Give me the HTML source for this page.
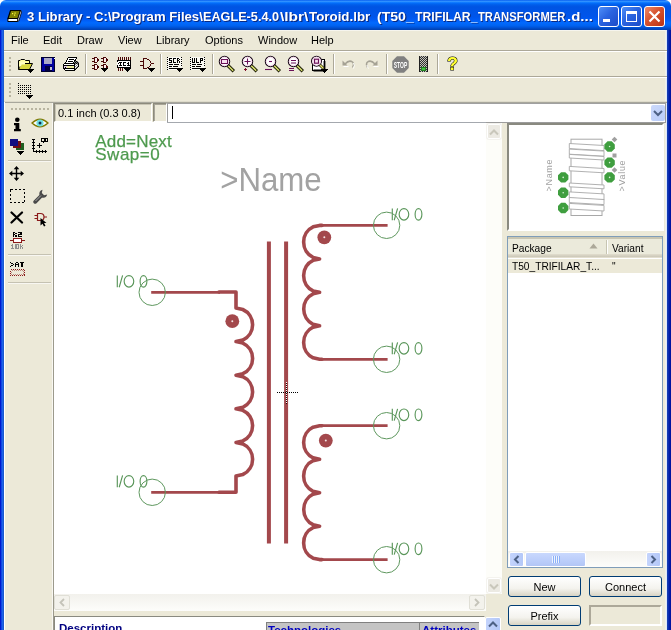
<!DOCTYPE html>
<html>
<head>
<meta charset="utf-8">
<style>
html,body{margin:0;padding:0;}
body{width:671px;height:630px;overflow:hidden;position:relative;background:#ece9d8;font-family:"Liberation Sans",sans-serif;font-size:11px;color:#000;}
.abs{position:absolute;}
div,span,svg{position:absolute;}
#title{left:0;top:0;width:671px;height:30px;border-radius:6px 6px 0 0;background:linear-gradient(to bottom,#0058ee 0%,#3593ff 4%,#288eff 6%,#127dff 8%,#036ffc 10%,#0262ee 14%,#0057e5 20%,#0054e3 24%,#0055eb 56%,#005bf5 66%,#026afe 76%,#0062ef 86%,#0052d6 92%,#0048c0 96%,#0040b0 100%);}
#title .txt{left:27px;top:9px;color:#fff;font-weight:bold;font-size:13px;white-space:nowrap;text-shadow:1px 1px 0 #0a2a80;}
#lb{left:0;top:30px;width:4px;height:600px;background:linear-gradient(to right,#0019cf 0,#0019cf 1px,#0a3ae0 1px,#1d62e8 2.5px,#1a55c0 4px);}
#rb{left:667px;top:30px;width:4px;height:600px;background:linear-gradient(to right,#1a44b4 0,#0a2cb0 1.5px,#001ca8 2.5px,#00109a 4px);}
#menu span{top:34px;font-size:11px;}
.hl{background:#fff;height:1px;}
.sh{background:#aca899;height:1px;}
.vs{background:#aca899;width:1px;height:20px;top:54px;box-shadow:1px 0 0 #fff;}
.wbtn{top:6px;width:21px;height:21px;border-radius:3px;border:1px solid #fff;box-sizing:border-box;}
.grip{width:2px;background:repeating-linear-gradient(to bottom,#b8b4a0 0,#b8b4a0 2px,transparent 2px,transparent 4px);}
.sunk{box-sizing:border-box;border:1px solid;border-color:#aca899 #fff #fff #aca899;}
.btn{box-sizing:border-box;border:1px solid #003c74;border-radius:3px;background:linear-gradient(to bottom,#fff 0%,#f4f3ee 60%,#d8d4c4 100%);text-align:center;font-size:11px;line-height:21px;}
.sbb{box-sizing:border-box;border:1px solid #fff;border-radius:2px;background:linear-gradient(to right,#c4d4fc,#b4c8f8);}
</style>
</head>
<body>
<div id="root" style="left:0;top:0;width:671px;height:630px;will-change:transform;">
<!-- title bar -->
<div style="left:0;top:0;width:671px;height:8px;background:#fff"></div>
<div id="title">
  <div class="txt" style="left:27px;transform:scaleX(1.0097);transform-origin:0 0;white-space:pre">3 Library - C:\Program Files\</div><div class="txt" style="left:203.4px;transform:scaleX(0.9740);transform-origin:0 0;white-space:pre">EAGLE-5.4.0</div><div class="txt" style="left:279.6px;transform:scaleX(1.1911);transform-origin:0 0;white-space:pre">\lbr\</div><div class="txt" style="left:309px;transform:scaleX(1.0267);transform-origin:0 0;white-space:pre">Toroid.lbr</div><div class="txt" style="left:376.8px;transform:scaleX(1.0804);transform-origin:0 0;white-space:pre">(T50_</div><div class="txt" style="left:414.5px;transform:scaleX(0.9405);transform-origin:0 0;white-space:pre">TRIFILAR_</div><div class="txt" style="left:478px;transform:scaleX(0.8644);transform-origin:0 0;white-space:pre">TRANSFORMER</div><div class="txt" style="left:567px;transform:scaleX(1.1522);transform-origin:0 0;white-space:pre">.d...</div>
  <svg style="left:7px;top:9px" width="16" height="15" viewBox="0 0 16 15">
   <path d="M3.500 1.500 H13.5 L11 9.500 H1 Z" fill="#808000" stroke="#000" stroke-width="1.200"/>
   <path d="M1 9.500 L0.800 12.5 H10.5 L11 9.500 Z" fill="#fff" stroke="#000" stroke-width="1"/>
   <path d="M11 9.500 L13.5 1.500 L14.500 3 L11.8 12 L10.5 12.5 Z" fill="#fff" stroke="#000" stroke-width="0.800"/>
   <rect x="5" y="4" width="1.200" height="1.200" fill="#ffff40"/><rect x="7.500" y="3.500" width="1.200" height="1.200" fill="#ffff40"/><rect x="7" y="5.500" width="1.200" height="1.200" fill="#ffff40"/>
  </svg>
  <div class="wbtn" style="left:598px;background:linear-gradient(135deg,#4f8ff8 0%,#2a64e0 45%,#1c4cc8 100%);"><div style="left:4px;top:12px;width:7px;height:3px;background:#fff"></div></div>
  <div class="wbtn" style="left:621px;background:linear-gradient(135deg,#4f8ff8 0%,#2a64e0 45%,#1c4cc8 100%);"><div style="left:4px;top:4px;width:11px;height:11px;box-sizing:border-box;border:1px solid #fff;border-top-width:3px"></div></div>
  <div class="wbtn" style="left:644px;background:linear-gradient(135deg,#ec8a6a 0%,#d6522e 45%,#b83214 100%);"><svg style="left:3px;top:3px" width="13" height="13"><path d="M1.500 1.500 L11.5 11.5 M11.5 1.500 L1.500 11.5" stroke="#fff" stroke-width="2.200"/></svg></div>
</div>
<div style="left:4px;top:30px;width:663px;height:1px;background:#f6f5ee"></div>
<div id="lb"></div>
<div id="rb"></div>
<div style="left:665px;top:30px;width:1px;height:600px;background:#f0f0e8"></div><div style="left:666px;top:30px;width:1px;height:600px;background:#dfe8fa"></div>
<div id="menu" style="left:0;top:0">
  <span style="left:11px">File</span>
  <span style="left:43px">Edit</span>
  <span style="left:77px">Draw</span>
  <span style="left:118px">View</span>
  <span style="left:156px">Library</span>
  <span style="left:205px">Options</span>
  <span style="left:258px">Window</span>
  <span style="left:311px">Help</span>
</div>
<!-- toolbar separators -->
<div class="sh" style="left:4px;top:50px;width:663px"></div>
<div class="hl" style="left:4px;top:51px;width:663px"></div>
<div class="sh" style="left:4px;top:76px;width:663px"></div>
<div class="hl" style="left:4px;top:77px;width:663px"></div>
<div style="left:4px;top:101px;width:663px;height:1px;background:#dedbcb"></div>
<div style="left:4px;top:102px;width:663px;height:1px;background:#a8a79c"></div>
<div class="grip" style="left:9px;top:57px;height:15px"></div>
<div class="grip" style="left:9px;top:83px;height:15px"></div>
<div id="tb1" style="left:0;top:0"><svg style="left:17px;top:57px" width="18" height="17" viewBox="0 0 18 17"><path d="M1.5 12.5 V3.5 H3 L4 2.5 H7.5 L8.5 3.5 H12.5 V6.5" fill="#ffffa0" stroke="#000" stroke-width="1"/>
<path d="M1.5 12.5 L4.5 6.5 H15.5 L12.5 12.5 Z" fill="#d8d840" stroke="#000" stroke-width="1"/>
<path d="M2.5 11 L5 7.5 H8 V4.5 H2.5Z" fill="#ffffc0" stroke="none"/>
<rect x="10" y="12" width="7" height="1" fill="#000" shape-rendering="crispEdges"/><rect x="11" y="13" width="5" height="1" fill="#000" shape-rendering="crispEdges"/><rect x="12" y="14" width="3" height="1" fill="#000" shape-rendering="crispEdges"/><rect x="13" y="15" width="1" height="1" fill="#000" shape-rendering="crispEdges"/></svg><svg style="left:41px;top:57px" width="16" height="15" viewBox="0 0 16 15" shape-rendering="crispEdges"><rect x="0.5" y="0.5" width="13" height="13.5" fill="#0000a0" stroke="#000030" stroke-width="1"/>
<rect x="3" y="1" width="8" height="6" fill="#a8a8c8"/><rect x="4" y="9" width="7" height="5" fill="#000040"/><rect x="9" y="10" width="2" height="3" fill="#c0c0d8"/><rect x="13" y="1" width="1" height="1" fill="#fff"/></svg><svg style="left:63px;top:57px" width="17" height="14" viewBox="0 0 17 14" shape-rendering="crispEdges"><rect x="5" y="0" width="9" height="1" fill="#000"/><rect x="4" y="1" width="1" height="1" fill="#000"/><rect x="5" y="1" width="8" height="1" fill="#fff"/><rect x="13" y="1" width="1" height="1" fill="#000"/><rect x="4" y="2" width="1" height="1" fill="#000"/><rect x="5" y="2" width="1" height="1" fill="#fff"/><rect x="6" y="2" width="5" height="1" fill="#000"/><rect x="11" y="2" width="1" height="1" fill="#fff"/><rect x="12" y="2" width="1" height="1" fill="#000"/><rect x="3" y="3" width="1" height="1" fill="#000"/><rect x="4" y="3" width="7" height="1" fill="#fff"/><rect x="11" y="3" width="2" height="1" fill="#000"/><rect x="3" y="4" width="1" height="1" fill="#000"/><rect x="4" y="4" width="1" height="1" fill="#fff"/><rect x="5" y="4" width="5" height="1" fill="#000"/><rect x="10" y="4" width="1" height="1" fill="#fff"/><rect x="11" y="4" width="1" height="1" fill="#000"/><rect x="12" y="4" width="1" height="1" fill="#808080"/><rect x="13" y="4" width="1" height="1" fill="#000"/><rect x="14" y="4" width="1" height="1" fill="#808080"/><rect x="2" y="5" width="1" height="1" fill="#000"/><rect x="3" y="5" width="7" height="1" fill="#fff"/><rect x="10" y="5" width="1" height="1" fill="#000"/><rect x="11" y="5" width="1" height="1" fill="#808080"/><rect x="12" y="5" width="1" height="1" fill="#000"/><rect x="13" y="5" width="1" height="1" fill="#808080"/><rect x="14" y="5" width="1" height="1" fill="#000"/><rect x="15" y="5" width="1" height="1" fill="#808080"/><rect x="1" y="6" width="11" height="1" fill="#000"/><rect x="12" y="6" width="1" height="1" fill="#808080"/><rect x="13" y="6" width="1" height="1" fill="#000"/><rect x="14" y="6" width="1" height="1" fill="#808080"/><rect x="15" y="6" width="1" height="1" fill="#000"/><rect x="0" y="7" width="1" height="1" fill="#000"/><rect x="1" y="7" width="10" height="1" fill="#fff"/><rect x="11" y="7" width="1" height="1" fill="#000"/><rect x="12" y="7" width="1" height="1" fill="#808080"/><rect x="13" y="7" width="1" height="1" fill="#fff"/><rect x="14" y="7" width="1" height="1" fill="#808080"/><rect x="15" y="7" width="1" height="1" fill="#000"/><rect x="0" y="8" width="12" height="1" fill="#000"/><rect x="12" y="8" width="1" height="1" fill="#fff"/><rect x="13" y="8" width="1" height="1" fill="#808080"/><rect x="14" y="8" width="1" height="1" fill="#fff"/><rect x="15" y="8" width="1" height="1" fill="#000"/><rect x="0" y="9" width="1" height="1" fill="#000"/><rect x="1" y="9" width="3" height="1" fill="#e8d0f0"/><rect x="4" y="9" width="7" height="1" fill="#f0f0a0"/><rect x="11" y="9" width="1" height="1" fill="#000"/><rect x="12" y="9" width="1" height="1" fill="#808080"/><rect x="13" y="9" width="1" height="1" fill="#fff"/><rect x="14" y="9" width="1" height="1" fill="#808080"/><rect x="15" y="9" width="1" height="1" fill="#000"/><rect x="0" y="10" width="1" height="1" fill="#000"/><rect x="1" y="10" width="1" height="1" fill="#e8d0f0"/><rect x="2" y="10" width="1" height="1" fill="#000"/><rect x="3" y="10" width="1" height="1" fill="#e8d0f0"/><rect x="4" y="10" width="7" height="1" fill="#f0f0a0"/><rect x="11" y="10" width="1" height="1" fill="#000"/><rect x="12" y="10" width="1" height="1" fill="#fff"/><rect x="13" y="10" width="1" height="1" fill="#808080"/><rect x="14" y="10" width="1" height="1" fill="#000"/><rect x="0" y="11" width="12" height="1" fill="#000"/><rect x="12" y="11" width="1" height="1" fill="#808080"/><rect x="13" y="11" width="1" height="1" fill="#000"/><rect x="1" y="12" width="1" height="1" fill="#000"/><rect x="2" y="12" width="9" height="1" fill="#fff"/><rect x="11" y="12" width="2" height="1" fill="#000"/><rect x="2" y="13" width="10" height="1" fill="#000"/></svg><svg style="left:92px;top:57px" width="17" height="15" viewBox="0 0 17 15" shape-rendering="crispEdges"><rect x="2" y="0" width="3" height="1" fill="#4a0808"/><rect x="0" y="1" width="3" height="1" fill="#4a0808"/><rect x="3" y="1" width="2" height="1" fill="#fdeeee"/><rect x="5" y="1" width="1" height="1" fill="#4a0808"/><rect x="2" y="2" width="1" height="1" fill="#4a0808"/><rect x="3" y="2" width="2" height="1" fill="#fdeeee"/><rect x="5" y="2" width="2" height="1" fill="#4a0808"/><rect x="2" y="3" width="1" height="1" fill="#4a0808"/><rect x="3" y="3" width="2" height="1" fill="#fdeeee"/><rect x="5" y="3" width="2" height="1" fill="#4a0808"/><rect x="0" y="4" width="3" height="1" fill="#4a0808"/><rect x="3" y="4" width="2" height="1" fill="#fdeeee"/><rect x="5" y="4" width="1" height="1" fill="#4a0808"/><rect x="2" y="5" width="3" height="1" fill="#4a0808"/><rect x="11" y="0" width="3" height="1" fill="#4a0808"/><rect x="9" y="1" width="3" height="1" fill="#4a0808"/><rect x="12" y="1" width="2" height="1" fill="#fdeeee"/><rect x="14" y="1" width="1" height="1" fill="#4a0808"/><rect x="11" y="2" width="1" height="1" fill="#4a0808"/><rect x="12" y="2" width="2" height="1" fill="#fdeeee"/><rect x="14" y="2" width="2" height="1" fill="#4a0808"/><rect x="11" y="3" width="1" height="1" fill="#4a0808"/><rect x="12" y="3" width="2" height="1" fill="#fdeeee"/><rect x="14" y="3" width="2" height="1" fill="#4a0808"/><rect x="9" y="4" width="3" height="1" fill="#4a0808"/><rect x="12" y="4" width="2" height="1" fill="#fdeeee"/><rect x="14" y="4" width="1" height="1" fill="#4a0808"/><rect x="11" y="5" width="3" height="1" fill="#4a0808"/><rect x="2" y="7" width="3" height="1" fill="#4a0808"/><rect x="0" y="8" width="3" height="1" fill="#4a0808"/><rect x="3" y="8" width="2" height="1" fill="#fdeeee"/><rect x="5" y="8" width="1" height="1" fill="#4a0808"/><rect x="2" y="9" width="1" height="1" fill="#4a0808"/><rect x="3" y="9" width="2" height="1" fill="#fdeeee"/><rect x="5" y="9" width="2" height="1" fill="#4a0808"/><rect x="2" y="10" width="1" height="1" fill="#4a0808"/><rect x="3" y="10" width="2" height="1" fill="#fdeeee"/><rect x="5" y="10" width="2" height="1" fill="#4a0808"/><rect x="0" y="11" width="3" height="1" fill="#4a0808"/><rect x="3" y="11" width="2" height="1" fill="#fdeeee"/><rect x="5" y="11" width="1" height="1" fill="#4a0808"/><rect x="2" y="12" width="3" height="1" fill="#4a0808"/><rect x="11" y="7" width="3" height="1" fill="#4a0808"/><rect x="9" y="8" width="3" height="1" fill="#4a0808"/><rect x="12" y="8" width="2" height="1" fill="#fdeeee"/><rect x="14" y="8" width="1" height="1" fill="#4a0808"/><rect x="11" y="9" width="1" height="1" fill="#4a0808"/><rect x="12" y="9" width="2" height="1" fill="#fdeeee"/><rect x="14" y="9" width="2" height="1" fill="#4a0808"/><rect x="11" y="10" width="1" height="1" fill="#4a0808"/><rect x="12" y="10" width="2" height="1" fill="#fdeeee"/><rect x="14" y="10" width="2" height="1" fill="#4a0808"/><rect x="9" y="11" width="7" height="1" fill="#000"/><rect x="10" y="12" width="5" height="1" fill="#000"/><rect x="11" y="13" width="3" height="1" fill="#000"/><rect x="12" y="14" width="1" height="1" fill="#000"/></svg><svg style="left:117px;top:57px" width="15" height="15" viewBox="0 0 15 15" shape-rendering="crispEdges"><rect x="1" y="0" width="1" height="1" fill="#4a0808"/><rect x="3" y="0" width="1" height="1" fill="#4a0808"/><rect x="5" y="0" width="1" height="1" fill="#4a0808"/><rect x="7" y="0" width="1" height="1" fill="#4a0808"/><rect x="9" y="0" width="1" height="1" fill="#4a0808"/><rect x="11" y="0" width="1" height="1" fill="#4a0808"/><rect x="13" y="0" width="1" height="1" fill="#4a0808"/><rect x="1" y="1" width="1" height="1" fill="#4a0808"/><rect x="3" y="1" width="1" height="1" fill="#4a0808"/><rect x="5" y="1" width="1" height="1" fill="#4a0808"/><rect x="7" y="1" width="1" height="1" fill="#4a0808"/><rect x="9" y="1" width="1" height="1" fill="#4a0808"/><rect x="11" y="1" width="1" height="1" fill="#4a0808"/><rect x="13" y="1" width="1" height="1" fill="#4a0808"/><rect x="1" y="2" width="1" height="1" fill="#4a0808"/><rect x="3" y="2" width="1" height="1" fill="#4a0808"/><rect x="5" y="2" width="1" height="1" fill="#4a0808"/><rect x="7" y="2" width="1" height="1" fill="#4a0808"/><rect x="9" y="2" width="1" height="1" fill="#4a0808"/><rect x="11" y="2" width="1" height="1" fill="#4a0808"/><rect x="13" y="2" width="1" height="1" fill="#4a0808"/><rect x="0" y="3" width="14" height="1" fill="#000"/><rect x="0" y="4" width="1" height="1" fill="#000"/><rect x="1" y="4" width="12" height="1" fill="#fff"/><rect x="13" y="4" width="1" height="1" fill="#000"/><rect x="0" y="5" width="2" height="1" fill="#fff"/><rect x="2" y="5" width="3" height="1" fill="#000"/><rect x="5" y="5" width="1" height="1" fill="#fff"/><rect x="6" y="5" width="3" height="1" fill="#000"/><rect x="9" y="5" width="2" height="1" fill="#fff"/><rect x="11" y="5" width="1" height="1" fill="#000"/><rect x="12" y="5" width="1" height="1" fill="#fff"/><rect x="13" y="5" width="1" height="1" fill="#000"/><rect x="0" y="6" width="1" height="1" fill="#fff"/><rect x="1" y="6" width="1" height="1" fill="#000"/><rect x="2" y="6" width="1" height="1" fill="#fff"/><rect x="3" y="6" width="1" height="1" fill="#000"/><rect x="4" y="6" width="2" height="1" fill="#fff"/><rect x="6" y="6" width="1" height="1" fill="#000"/><rect x="7" y="6" width="3" height="1" fill="#fff"/><rect x="10" y="6" width="2" height="1" fill="#000"/><rect x="12" y="6" width="1" height="1" fill="#fff"/><rect x="13" y="6" width="1" height="1" fill="#000"/><rect x="0" y="7" width="3" height="1" fill="#fff"/><rect x="3" y="7" width="1" height="1" fill="#000"/><rect x="4" y="7" width="2" height="1" fill="#fff"/><rect x="6" y="7" width="1" height="1" fill="#000"/><rect x="7" y="7" width="4" height="1" fill="#fff"/><rect x="11" y="7" width="1" height="1" fill="#000"/><rect x="12" y="7" width="1" height="1" fill="#fff"/><rect x="13" y="7" width="1" height="1" fill="#000"/><rect x="0" y="8" width="1" height="1" fill="#000"/><rect x="1" y="8" width="1" height="1" fill="#fff"/><rect x="2" y="8" width="3" height="1" fill="#000"/><rect x="5" y="8" width="1" height="1" fill="#fff"/><rect x="6" y="8" width="3" height="1" fill="#000"/><rect x="9" y="8" width="1" height="1" fill="#fff"/><rect x="10" y="8" width="4" height="1" fill="#000"/><rect x="0" y="9" width="1" height="1" fill="#000"/><rect x="1" y="9" width="12" height="1" fill="#fff"/><rect x="13" y="9" width="1" height="1" fill="#000"/><rect x="0" y="10" width="14" height="1" fill="#000"/><rect x="1" y="11" width="1" height="1" fill="#4a0808"/><rect x="3" y="11" width="1" height="1" fill="#4a0808"/><rect x="5" y="11" width="1" height="1" fill="#4a0808"/><rect x="7" y="11" width="7" height="1" fill="#000"/><rect x="1" y="12" width="1" height="1" fill="#4a0808"/><rect x="3" y="12" width="1" height="1" fill="#4a0808"/><rect x="5" y="12" width="1" height="1" fill="#4a0808"/><rect x="8" y="12" width="5" height="1" fill="#000"/><rect x="1" y="13" width="1" height="1" fill="#4a0808"/><rect x="3" y="13" width="1" height="1" fill="#4a0808"/><rect x="5" y="13" width="1" height="1" fill="#4a0808"/><rect x="9" y="13" width="3" height="1" fill="#000"/><rect x="10" y="14" width="1" height="1" fill="#000"/></svg><svg style="left:140px;top:58px" width="16" height="14" viewBox="0 0 16 14" shape-rendering="crispEdges"><rect x="3" y="0" width="4" height="1" fill="#4a0808"/><rect x="3" y="1" width="1" height="1" fill="#4a0808"/><rect x="7" y="1" width="2" height="1" fill="#4a0808"/><rect x="3" y="2" width="1" height="1" fill="#4a0808"/><rect x="9" y="2" width="1" height="1" fill="#4a0808"/><rect x="0" y="3" width="4" height="1" fill="#4a0808"/><rect x="10" y="3" width="1" height="1" fill="#4a0808"/><rect x="3" y="4" width="1" height="1" fill="#4a0808"/><rect x="10" y="4" width="1" height="1" fill="#4a0808"/><rect x="3" y="5" width="1" height="1" fill="#4a0808"/><rect x="11" y="5" width="3" height="1" fill="#4a0808"/><rect x="3" y="6" width="1" height="1" fill="#4a0808"/><rect x="10" y="6" width="1" height="1" fill="#4a0808"/><rect x="0" y="7" width="4" height="1" fill="#4a0808"/><rect x="10" y="7" width="1" height="1" fill="#4a0808"/><rect x="3" y="8" width="1" height="1" fill="#4a0808"/><rect x="9" y="8" width="1" height="1" fill="#4a0808"/><rect x="3" y="9" width="1" height="1" fill="#4a0808"/><rect x="7" y="9" width="2" height="1" fill="#4a0808"/><rect x="3" y="10" width="4" height="1" fill="#4a0808"/><rect x="8" y="10" width="7" height="1" fill="#000"/><rect x="9" y="11" width="5" height="1" fill="#000"/><rect x="10" y="12" width="3" height="1" fill="#000"/><rect x="11" y="13" width="1" height="1" fill="#000"/></svg><svg style="left:167px;top:57px" width="17" height="16" viewBox="0 0 17 16" shape-rendering="crispEdges"><rect x="0" y="0" width="15" height="13" fill="#fbfaf4"/><rect x="0" y="0" width="1" height="1" fill="#000"/><rect x="0" y="2" width="1" height="1" fill="#000"/><rect x="0" y="4" width="1" height="1" fill="#000"/><rect x="0" y="6" width="1" height="1" fill="#000"/><rect x="0" y="8" width="1" height="1" fill="#000"/><rect x="0" y="10" width="1" height="1" fill="#000"/><rect x="0" y="12" width="1" height="1" fill="#000"/><rect x="14" y="0" width="1" height="1" fill="#000"/><rect x="14" y="2" width="1" height="1" fill="#000"/><rect x="14" y="4" width="1" height="1" fill="#000"/><rect x="14" y="6" width="1" height="1" fill="#000"/><rect x="14" y="8" width="1" height="1" fill="#000"/><rect x="0" y="0" width="1" height="1" fill="#000"/><rect x="14" y="0" width="1" height="1" fill="#000"/><rect x="2.00" y="1.00" width="1" height="1" fill="#000"/><rect x="3.00" y="1.00" width="1" height="1" fill="#000"/><rect x="4.00" y="1.00" width="1" height="1" fill="#000"/><rect x="2.00" y="2.00" width="1" height="1" fill="#000"/><rect x="2.00" y="3.00" width="1" height="1" fill="#000"/><rect x="3.00" y="3.00" width="1" height="1" fill="#000"/><rect x="4.00" y="3.00" width="1" height="1" fill="#000"/><rect x="4.00" y="4.00" width="1" height="1" fill="#000"/><rect x="2.00" y="5.00" width="1" height="1" fill="#000"/><rect x="3.00" y="5.00" width="1" height="1" fill="#000"/><rect x="4.00" y="5.00" width="1" height="1" fill="#000"/><rect x="6.00" y="1.00" width="1" height="1" fill="#000"/><rect x="7.00" y="1.00" width="1" height="1" fill="#000"/><rect x="8.00" y="1.00" width="1" height="1" fill="#000"/><rect x="6.00" y="2.00" width="1" height="1" fill="#000"/><rect x="6.00" y="3.00" width="1" height="1" fill="#000"/><rect x="6.00" y="4.00" width="1" height="1" fill="#000"/><rect x="6.00" y="5.00" width="1" height="1" fill="#000"/><rect x="7.00" y="5.00" width="1" height="1" fill="#000"/><rect x="8.00" y="5.00" width="1" height="1" fill="#000"/><rect x="10.00" y="1.00" width="1" height="1" fill="#000"/><rect x="11.00" y="1.00" width="1" height="1" fill="#000"/><rect x="10.00" y="2.00" width="1" height="1" fill="#000"/><rect x="12.00" y="2.00" width="1" height="1" fill="#000"/><rect x="10.00" y="3.00" width="1" height="1" fill="#000"/><rect x="11.00" y="3.00" width="1" height="1" fill="#000"/><rect x="10.00" y="4.00" width="1" height="1" fill="#000"/><rect x="12.00" y="4.00" width="1" height="1" fill="#000"/><rect x="10.00" y="5.00" width="1" height="1" fill="#000"/><rect x="12.00" y="5.00" width="1" height="1" fill="#000"/><path d="M2 7.500 h4 M7 7.500 h5 M2 9.500 h3 M6 9.500 h5 M2 11.5 h7" stroke="#000"/><rect x="9" y="11" width="7" height="1" fill="#000"/><rect x="10" y="12" width="5" height="1" fill="#000"/><rect x="11" y="13" width="3" height="1" fill="#000"/><rect x="12" y="14" width="1" height="1" fill="#000"/></svg><svg style="left:190px;top:57px" width="17" height="16" viewBox="0 0 17 16" shape-rendering="crispEdges"><rect x="0" y="0" width="15" height="13" fill="#fbfaf4"/><rect x="0" y="0" width="1" height="1" fill="#000"/><rect x="0" y="2" width="1" height="1" fill="#000"/><rect x="0" y="4" width="1" height="1" fill="#000"/><rect x="0" y="6" width="1" height="1" fill="#000"/><rect x="0" y="8" width="1" height="1" fill="#000"/><rect x="0" y="10" width="1" height="1" fill="#000"/><rect x="0" y="12" width="1" height="1" fill="#000"/><rect x="14" y="0" width="1" height="1" fill="#000"/><rect x="14" y="2" width="1" height="1" fill="#000"/><rect x="14" y="4" width="1" height="1" fill="#000"/><rect x="14" y="6" width="1" height="1" fill="#000"/><rect x="14" y="8" width="1" height="1" fill="#000"/><rect x="0" y="0" width="1" height="1" fill="#000"/><rect x="14" y="0" width="1" height="1" fill="#000"/><rect x="2.00" y="1.00" width="1" height="1" fill="#000"/><rect x="4.00" y="1.00" width="1" height="1" fill="#000"/><rect x="2.00" y="2.00" width="1" height="1" fill="#000"/><rect x="4.00" y="2.00" width="1" height="1" fill="#000"/><rect x="2.00" y="3.00" width="1" height="1" fill="#000"/><rect x="4.00" y="3.00" width="1" height="1" fill="#000"/><rect x="2.00" y="4.00" width="1" height="1" fill="#000"/><rect x="4.00" y="4.00" width="1" height="1" fill="#000"/><rect x="2.00" y="5.00" width="1" height="1" fill="#000"/><rect x="3.00" y="5.00" width="1" height="1" fill="#000"/><rect x="4.00" y="5.00" width="1" height="1" fill="#000"/><rect x="6.00" y="1.00" width="1" height="1" fill="#000"/><rect x="6.00" y="2.00" width="1" height="1" fill="#000"/><rect x="6.00" y="3.00" width="1" height="1" fill="#000"/><rect x="6.00" y="4.00" width="1" height="1" fill="#000"/><rect x="6.00" y="5.00" width="1" height="1" fill="#000"/><rect x="7.00" y="5.00" width="1" height="1" fill="#000"/><rect x="8.00" y="5.00" width="1" height="1" fill="#000"/><rect x="10.00" y="1.00" width="1" height="1" fill="#000"/><rect x="11.00" y="1.00" width="1" height="1" fill="#000"/><rect x="12.00" y="1.00" width="1" height="1" fill="#000"/><rect x="10.00" y="2.00" width="1" height="1" fill="#000"/><rect x="12.00" y="2.00" width="1" height="1" fill="#000"/><rect x="10.00" y="3.00" width="1" height="1" fill="#000"/><rect x="11.00" y="3.00" width="1" height="1" fill="#000"/><rect x="12.00" y="3.00" width="1" height="1" fill="#000"/><rect x="10.00" y="4.00" width="1" height="1" fill="#000"/><rect x="10.00" y="5.00" width="1" height="1" fill="#000"/><path d="M2 7.500 h4 M7 7.500 h5 M2 9.500 h3 M6 9.500 h5 M2 11.5 h7" stroke="#000"/><rect x="9" y="11" width="7" height="1" fill="#000"/><rect x="10" y="12" width="5" height="1" fill="#000"/><rect x="11" y="13" width="3" height="1" fill="#000"/><rect x="12" y="14" width="1" height="1" fill="#000"/></svg><svg style="left:218.0px;top:55px" width="19" height="19" viewBox="0 0 19 19"><path d="M9.700 10.2 L15.8 16.3" stroke="#1a1a00" stroke-width="3.400"/><path d="M9.700 10.2 L15.200 15.700" stroke="#d8e070" stroke-width="1.600"/><circle cx="6.500" cy="6.500" r="5.200" fill="#fff" stroke="#1c0c1c" stroke-width="1.1"/><circle cx="6.500" cy="6.500" r="4.200" fill="none" stroke="#f2d4e8" stroke-width="1"/><rect x="3.500" y="4.500" width="6" height="4" fill="#f8e0f0" stroke="#6a1058" stroke-width="1"/></svg><svg style="left:240.5px;top:55px" width="19" height="19" viewBox="0 0 19 19"><path d="M9.700 10.2 L15.8 16.3" stroke="#1a1a00" stroke-width="3.400"/><path d="M9.700 10.2 L15.200 15.700" stroke="#d8e070" stroke-width="1.600"/><circle cx="6.500" cy="6.500" r="5.200" fill="#fff" stroke="#1c0c1c" stroke-width="1.1"/><circle cx="6.500" cy="6.500" r="4.200" fill="none" stroke="#f2d4e8" stroke-width="1"/><path d="M3.500 6.500 H9.500 M6.500 3.500 V9.500" stroke="#6a1058" stroke-width="1.1"/><path d="M3 14.5 H6 M4.500 13 V16" stroke="#801030" stroke-width="1"/></svg><svg style="left:263.5px;top:55px" width="19" height="19" viewBox="0 0 19 19"><path d="M9.700 10.2 L15.8 16.3" stroke="#1a1a00" stroke-width="3.400"/><path d="M9.700 10.2 L15.200 15.700" stroke="#d8e070" stroke-width="1.600"/><circle cx="6.500" cy="6.500" r="5.200" fill="#fff" stroke="#1c0c1c" stroke-width="1.1"/><circle cx="6.500" cy="6.500" r="4.200" fill="none" stroke="#f2d4e8" stroke-width="1"/><path d="M5 6.500 H8" stroke="#6a1058" stroke-width="1.1"/><path d="M1 14.5 H8" stroke="#6a1058" stroke-width="1.1"/></svg><svg style="left:286.5px;top:55px" width="19" height="19" viewBox="0 0 19 19"><path d="M9.700 10.2 L15.8 16.3" stroke="#1a1a00" stroke-width="3.400"/><path d="M9.700 10.2 L15.200 15.700" stroke="#d8e070" stroke-width="1.600"/><circle cx="6.500" cy="6.500" r="5.200" fill="#fff" stroke="#1c0c1c" stroke-width="1.1"/><circle cx="6.500" cy="6.500" r="4.200" fill="none" stroke="#f2d4e8" stroke-width="1"/><path d="M4 5.500 H9 M4 8 H9" stroke="#6a1058" stroke-width="1.1"/><path d="M2 13.5 H7 M2 15.5 H7" stroke="#6a1058" stroke-width="1.2"/></svg><svg style="left:310px;top:55px" width="19" height="19" viewBox="0 0 19 19"><rect x="2.500" y="4.500" width="12" height="11" fill="#fff" stroke="#000"/><path d="M3.500 15.5 H14.500 V6" stroke="#000" stroke-width="1.800" fill="none"/><circle cx="6.500" cy="6.200" r="5" fill="#fff" stroke="#1c0c1c" stroke-width="1.1"/><circle cx="6.500" cy="6.200" r="4" fill="none" stroke="#f2d4e8" stroke-width="1"/><rect x="4.500" y="4.200" width="4" height="4" fill="#f8e0f0" stroke="#6a1058" stroke-width="1.2"/><path d="M10 10 L13.5 13.5" stroke="#303000" stroke-width="3"/><path d="M10.3 10.3 L13.2 13.2" stroke="#e8e870" stroke-width="1.3"/><rect x="11" y="14" width="7" height="1" fill="#000" shape-rendering="crispEdges"/><rect x="12" y="15" width="5" height="1" fill="#000" shape-rendering="crispEdges"/><rect x="13" y="16" width="3" height="1" fill="#000" shape-rendering="crispEdges"/><rect x="14" y="17" width="1" height="1" fill="#000" shape-rendering="crispEdges"/></svg><svg style="left:341px;top:59px" width="15" height="11" viewBox="0 0 15 11"><path d="M1.500 1.500 V6.500 H6.500 Z" fill="#a5a295"/><path d="M4 5 Q8 0.500 11.5 3 Q13.5 5 11.5 8.500" fill="none" stroke="#a5a295" stroke-width="1.500"/><path d="M2.500 7.500 H7.500" stroke="#fff" stroke-width="1"/><path d="M12.5 4 Q14 6 12.5 9.500" fill="none" stroke="#fff" stroke-width="1"/></svg><svg style="left:364px;top:59px" width="15" height="11" viewBox="0 0 15 11"><path d="M13.5 1.500 V6.500 H8.500 Z" fill="#a5a295"/><path d="M11 5 Q7 0.500 3.500 3 Q1.500 5 3.500 8.500" fill="none" stroke="#a5a295" stroke-width="1.500"/><path d="M9.500 7.500 H14.500" stroke="#fff" stroke-width="1"/><path d="M4.500 9.500 Q3 8 3 6" fill="none" stroke="#fff" stroke-width="1"/></svg><svg style="left:392px;top:55.5px" width="17" height="17" viewBox="0 0 17 17"><polygon points="5,0.300 12,0.300 16.7,5 16.7,12 12,16.7 5,16.7 0.300,12 0.300,5" fill="#808080"/><text x="1.800" y="11.6" font-family="Liberation Sans, sans-serif" font-weight="bold" font-size="8.5" fill="#fff" textLength="13.4" lengthAdjust="spacingAndGlyphs">STOP</text></svg><svg style="left:419px;top:56px" width="10" height="16" viewBox="0 0 10 16" shape-rendering="crispEdges"><defs><pattern id="dth" width="2" height="2" patternUnits="userSpaceOnUse"><rect width="2" height="2" fill="#c4c4bc"/><rect width="1" height="1" fill="#303030"/><rect x="1" y="1" width="1" height="1" fill="#303030"/></pattern></defs><rect x="0" y="0" width="9" height="16" fill="url(#dth)"/><rect x="0" y="0" width="1" height="16" fill="#202020"/><rect x="8" y="0" width="1" height="16" fill="#202020"/><rect x="2" y="11" width="5" height="4" fill="#208020"/><rect x="3" y="12" width="3" height="2" fill="#40c040"/></svg><svg style="left:446px;top:54px" width="13" height="18" viewBox="0 0 13 18"><text x="1" y="15.5" font-family="Liberation Sans, sans-serif" font-weight="bold" font-size="18" fill="#ffff30" stroke="#000" stroke-width="1.1" paint-order="stroke">?</text></svg><div class="vs" style="left:85px"></div><div class="vs" style="left:160px"></div><div class="vs" style="left:212px"></div><div class="vs" style="left:333px"></div><div class="vs" style="left:386px"></div><div class="vs" style="left:437px"></div></div>
<div id="tb2" style="left:0;top:0"><svg style="left:18px;top:83px" width="17" height="16" viewBox="0 0 17 16" shape-rendering="crispEdges"><rect x="0" y="0" width="1" height="1" fill="#000"/><rect x="0" y="2" width="1" height="1" fill="#000"/><rect x="0" y="4" width="1" height="1" fill="#000"/><rect x="0" y="6" width="1" height="1" fill="#000"/><rect x="0" y="8" width="1" height="1" fill="#000"/><rect x="0" y="10" width="1" height="1" fill="#000"/><rect x="2" y="2" width="1" height="1" fill="#000"/><rect x="2" y="4" width="1" height="1" fill="#000"/><rect x="2" y="6" width="1" height="1" fill="#000"/><rect x="2" y="8" width="1" height="1" fill="#000"/><rect x="2" y="10" width="1" height="1" fill="#000"/><rect x="4" y="2" width="1" height="1" fill="#000"/><rect x="4" y="4" width="1" height="1" fill="#000"/><rect x="4" y="6" width="1" height="1" fill="#000"/><rect x="4" y="8" width="1" height="1" fill="#000"/><rect x="4" y="10" width="1" height="1" fill="#000"/><rect x="6" y="2" width="1" height="1" fill="#000"/><rect x="6" y="4" width="1" height="1" fill="#000"/><rect x="6" y="6" width="1" height="1" fill="#000"/><rect x="6" y="8" width="1" height="1" fill="#000"/><rect x="6" y="10" width="1" height="1" fill="#000"/><rect x="8" y="2" width="1" height="1" fill="#000"/><rect x="8" y="4" width="1" height="1" fill="#000"/><rect x="8" y="6" width="1" height="1" fill="#000"/><rect x="8" y="8" width="1" height="1" fill="#000"/><rect x="8" y="10" width="1" height="1" fill="#000"/><rect x="10" y="2" width="1" height="1" fill="#000"/><rect x="10" y="4" width="1" height="1" fill="#000"/><rect x="10" y="6" width="1" height="1" fill="#000"/><rect x="10" y="8" width="1" height="1" fill="#000"/><rect x="10" y="10" width="1" height="1" fill="#000"/><rect x="12" y="2" width="1" height="1" fill="#000"/><rect x="12" y="4" width="1" height="1" fill="#000"/><rect x="12" y="6" width="1" height="1" fill="#000"/><rect x="12" y="8" width="1" height="1" fill="#000"/><rect x="12" y="10" width="1" height="1" fill="#000"/><rect x="8" y="12" width="7" height="1" fill="#000" shape-rendering="crispEdges"/><rect x="9" y="13" width="5" height="1" fill="#000" shape-rendering="crispEdges"/><rect x="10" y="14" width="3" height="1" fill="#000" shape-rendering="crispEdges"/><rect x="11" y="15" width="1" height="1" fill="#000" shape-rendering="crispEdges"/></svg></div>

<!-- param bar -->
<div style="left:54px;top:103px;width:98px;height:19px;box-sizing:border-box;border:1px solid;border-color:#8c8a7c #fff #fff #8c8a7c;box-shadow:inset 1px 1px 0 #c8c5b5"></div>
<span style="left:58px;top:107px;font-size:11px;white-space:nowrap;">0.1 inch (0.3 0.8)</span>
<div style="left:153px;top:103px;width:14px;height:19px;box-sizing:border-box;border:1px solid;border-color:#8c8a7c #fff #fff #8c8a7c;box-shadow:inset 1px 1px 0 #a8a598"></div>
<div style="left:167px;top:103px;width:499px;height:20px;background:#fff;box-sizing:border-box;border:1px solid #9c9c9c;border-top-color:#a0a0a0"></div>
<div style="left:172px;top:106px;width:1px;height:13px;background:#000"></div>
<div id="combo" style="left:651px;top:105px;width:14px;height:16px;border-radius:2px;background:linear-gradient(135deg,#cbd9fc,#b9ccf8)"><svg style="left:2px;top:5px" width="10" height="7"><path d="M1 1 L5 5 L9 1" fill="none" stroke="#4d6185" stroke-width="2"/></svg></div>

<!-- left palette -->
<div id="pal" style="left:0;top:0"><div style="left:4px;top:102px;width:1px;height:528px;background:#fff"></div><div style="left:52px;top:103px;width:1px;height:527px;background:#f8f7f2"></div><div style="left:53px;top:103px;width:1px;height:527px;background:#9c9a8c"></div><div style="left:11px;top:108px;width:38px;height:2px;background:repeating-linear-gradient(to right,#b8b4a0 0,#b8b4a0 2px,transparent 2px,transparent 4px)"></div><svg style="left:13px;top:117px" width="9" height="15" viewBox="0 0 9 15"><circle cx="4.300" cy="2.700" r="2.300" fill="#000"/><path d="M1 6 H6.300 V12 H7.800 V14.300 H1 V12 H2.500 V8.200 H1 Z" fill="#000"/></svg><svg style="left:31px;top:117px" width="18" height="13" viewBox="0 0 18 13"><path d="M1 6 Q9 -1.500 17 6 Q9 13.5 1 6 Z" fill="#fff" stroke="#807800" stroke-width="1.3"/><circle cx="9" cy="6" r="3.600" fill="#70e0e0"/><circle cx="9" cy="6" r="1.500" fill="#103050"/></svg><svg style="left:10px;top:139px" width="16" height="16" viewBox="0 0 16 16" shape-rendering="crispEdges"><rect x="6" y="4" width="8" height="7" fill="#206020"/><rect x="3" y="2" width="8" height="7" fill="#701010"/><rect x="0" y="0" width="8" height="7" fill="#101080"/><rect x="7" y="12" width="7" height="1" fill="#000" shape-rendering="crispEdges"/><rect x="8" y="13" width="5" height="1" fill="#000" shape-rendering="crispEdges"/><rect x="9" y="14" width="3" height="1" fill="#000" shape-rendering="crispEdges"/><rect x="10" y="15" width="1" height="1" fill="#000" shape-rendering="crispEdges"/></svg><svg style="left:32px;top:138px" width="17" height="16" viewBox="0 0 17 16" shape-rendering="crispEdges"><path d="M1.500 1 V13.5 H15" stroke="#000" fill="none"/><rect x="0" y="1" width="3" height="1" fill="#000"/><rect x="0" y="4" width="3" height="1" fill="#000"/><rect x="0" y="7" width="3" height="1" fill="#000"/><rect x="0" y="10" width="3" height="1" fill="#000"/><rect x="4" y="12" width="1" height="3" fill="#000"/><rect x="7" y="12" width="1" height="3" fill="#000"/><rect x="10" y="12" width="1" height="3" fill="#000"/><rect x="13" y="12" width="1" height="3" fill="#000"/><path d="M5 7.500 H10 M7.500 5 V10" stroke="#000"/><rect x="9" y="0" width="3" height="3" fill="none" stroke="#000" transform="translate(.5 .5)"/><rect x="11" y="3" width="1" height="2" fill="#000"/><rect x="13" y="0" width="2" height="3" fill="none" stroke="#000" transform="translate(.5 .5)"/></svg><div style="left:8px;top:160px;width:43px;height:1px;background:#c5c2b2;box-shadow:0 1px 0 #f8f7f2"></div><div style="left:8px;top:254px;width:43px;height:1px;background:#c5c2b2;box-shadow:0 1px 0 #f8f7f2"></div><div style="left:8px;top:282px;width:43px;height:1px;background:#c5c2b2;box-shadow:0 1px 0 #f8f7f2"></div><svg style="left:9px;top:166px" width="16" height="16" viewBox="0 0 16 16"><path d="M7.500 2 V13 M2 7.500 H13" stroke="#000" stroke-width="1.400"/><path d="M7.500 0 L10.3 3.300 H4.700Z M7.500 15 L10.3 11.7 H4.700Z M0 7.500 L3.300 4.700 V10.3Z M15 7.500 L11.7 4.700 V10.3Z" fill="#000"/></svg><svg style="left:10px;top:189px" width="15" height="14" viewBox="0 0 15 14" shape-rendering="crispEdges"><rect x="0.500" y="0.500" width="14" height="13" fill="none" stroke="#000" stroke-dasharray="2 2"/></svg><svg style="left:33px;top:189px" width="15" height="15" viewBox="0 0 15 15"><path d="M2.200 12.8 L8.500 6.500" stroke="#4a4a4a" stroke-width="3.800" stroke-linecap="round"/><path d="M6.500 6 Q5.500 2 9.500 0.800 L8.800 4 L11 6.200 L14.200 5.500 Q13 9.500 9 8.500 Z" fill="#4a4a4a"/><path d="M2.500 12 L8 6.500" stroke="#b0b0b0" stroke-width="0.900"/></svg><svg style="left:10px;top:211px" width="14" height="13" viewBox="0 0 14 13"><path d="M1.500 1.500 L12 11.5 M12 1.500 L1.500 11.5" stroke="#000" stroke-width="2.200" stroke-linecap="round"/></svg><svg style="left:34px;top:212px" width="15" height="15" viewBox="0 0 15 15"><path d="M3.500 1.500 H6.500 Q10 1.500 10 5 Q10 8.500 6.500 8.500 H3.500 Z" fill="none" stroke="#8b1a1a" stroke-width="1.200"/><path d="M0.500 3.500 H3.500 M0.500 6.500 H3.500 M10 5 H13" stroke="#8b1a1a" stroke-width="1.200"/><path d="M6.500 6 V13.5 L8.500 11.8 L10 14.500 L11.5 13.8 L10 11 L12.5 11 Z" fill="#000"/></svg><svg style="left:10px;top:232px" width="16" height="18" viewBox="0 0 16 18" shape-rendering="crispEdges"><rect x="2.50" y="0.00" width="1.35" height="1" fill="#000"/><rect x="3.85" y="0.00" width="1.35" height="1" fill="#000"/><rect x="2.50" y="1.00" width="1.35" height="1" fill="#000"/><rect x="5.20" y="1.00" width="1.35" height="1" fill="#000"/><rect x="2.50" y="2.00" width="1.35" height="1" fill="#000"/><rect x="3.85" y="2.00" width="1.35" height="1" fill="#000"/><rect x="2.50" y="3.00" width="1.35" height="1" fill="#000"/><rect x="5.20" y="3.00" width="1.35" height="1" fill="#000"/><rect x="2.50" y="4.00" width="1.35" height="1" fill="#000"/><rect x="5.20" y="4.00" width="1.35" height="1" fill="#000"/><rect x="7.75" y="0.00" width="1.35" height="1" fill="#000"/><rect x="9.10" y="0.00" width="1.35" height="1" fill="#000"/><rect x="10.45" y="0.00" width="1.35" height="1" fill="#000"/><rect x="10.45" y="1.00" width="1.35" height="1" fill="#000"/><rect x="7.75" y="2.00" width="1.35" height="1" fill="#000"/><rect x="9.10" y="2.00" width="1.35" height="1" fill="#000"/><rect x="10.45" y="2.00" width="1.35" height="1" fill="#000"/><rect x="7.75" y="3.00" width="1.35" height="1" fill="#000"/><rect x="7.75" y="4.00" width="1.35" height="1" fill="#000"/><rect x="9.10" y="4.00" width="1.35" height="1" fill="#000"/><rect x="10.45" y="4.00" width="1.35" height="1" fill="#000"/><rect x="0" y="8" width="15" height="1" fill="#8b1a1a"/><rect x="3.500" y="6.500" width="8" height="4" fill="#fff" stroke="#8b1a1a"/><rect x="2.15" y="12.00" width="1.15" height="1" fill="#909090"/><rect x="1.00" y="13.00" width="1.15" height="1" fill="#909090"/><rect x="2.15" y="13.00" width="1.15" height="1" fill="#909090"/><rect x="2.15" y="14.00" width="1.15" height="1" fill="#909090"/><rect x="2.15" y="15.00" width="1.15" height="1" fill="#909090"/><rect x="1.00" y="16.00" width="1.15" height="1" fill="#909090"/><rect x="2.15" y="16.00" width="1.15" height="1" fill="#909090"/><rect x="3.30" y="16.00" width="1.15" height="1" fill="#909090"/><rect x="5.45" y="12.00" width="1.15" height="1" fill="#909090"/><rect x="6.60" y="12.00" width="1.15" height="1" fill="#909090"/><rect x="7.75" y="12.00" width="1.15" height="1" fill="#909090"/><rect x="5.45" y="13.00" width="1.15" height="1" fill="#909090"/><rect x="7.75" y="13.00" width="1.15" height="1" fill="#909090"/><rect x="5.45" y="14.00" width="1.15" height="1" fill="#909090"/><rect x="7.75" y="14.00" width="1.15" height="1" fill="#909090"/><rect x="5.45" y="15.00" width="1.15" height="1" fill="#909090"/><rect x="7.75" y="15.00" width="1.15" height="1" fill="#909090"/><rect x="5.45" y="16.00" width="1.15" height="1" fill="#909090"/><rect x="6.60" y="16.00" width="1.15" height="1" fill="#909090"/><rect x="7.75" y="16.00" width="1.15" height="1" fill="#909090"/><rect x="9.90" y="12.00" width="1.15" height="1" fill="#909090"/><rect x="9.90" y="13.00" width="1.15" height="1" fill="#909090"/><rect x="12.20" y="13.00" width="1.15" height="1" fill="#909090"/><rect x="9.90" y="14.00" width="1.15" height="1" fill="#909090"/><rect x="11.05" y="14.00" width="1.15" height="1" fill="#909090"/><rect x="9.90" y="15.00" width="1.15" height="1" fill="#909090"/><rect x="12.20" y="15.00" width="1.15" height="1" fill="#909090"/><rect x="9.90" y="16.00" width="1.15" height="1" fill="#909090"/><rect x="12.20" y="16.00" width="1.15" height="1" fill="#909090"/></svg><svg style="left:10px;top:262px" width="16" height="15" viewBox="0 0 16 15" shape-rendering="crispEdges"><rect x="0.00" y="0.00" width="1.35" height="1" fill="#000"/><rect x="1.35" y="1.00" width="1.35" height="1" fill="#000"/><rect x="2.70" y="2.00" width="1.35" height="1" fill="#000"/><rect x="1.35" y="3.00" width="1.35" height="1" fill="#000"/><rect x="0.00" y="4.00" width="1.35" height="1" fill="#000"/><rect x="6.40" y="0.00" width="1.35" height="1" fill="#000"/><rect x="5.05" y="1.00" width="1.35" height="1" fill="#000"/><rect x="7.75" y="1.00" width="1.35" height="1" fill="#000"/><rect x="5.05" y="2.00" width="1.35" height="1" fill="#000"/><rect x="6.40" y="2.00" width="1.35" height="1" fill="#000"/><rect x="7.75" y="2.00" width="1.35" height="1" fill="#000"/><rect x="5.05" y="3.00" width="1.35" height="1" fill="#000"/><rect x="7.75" y="3.00" width="1.35" height="1" fill="#000"/><rect x="5.05" y="4.00" width="1.35" height="1" fill="#000"/><rect x="7.75" y="4.00" width="1.35" height="1" fill="#000"/><rect x="10.10" y="0.00" width="1.35" height="1" fill="#000"/><rect x="11.45" y="0.00" width="1.35" height="1" fill="#000"/><rect x="12.80" y="0.00" width="1.35" height="1" fill="#000"/><rect x="11.45" y="1.00" width="1.35" height="1" fill="#000"/><rect x="11.45" y="2.00" width="1.35" height="1" fill="#000"/><rect x="11.45" y="3.00" width="1.35" height="1" fill="#000"/><rect x="11.45" y="4.00" width="1.35" height="1" fill="#000"/><rect x="0.500" y="7.500" width="14" height="6" fill="none" stroke="#8b1a1a" stroke-dasharray="1 1"/><rect x="1.500" y="8.500" width="12" height="4" fill="none" stroke="#8b1a1a" stroke-dasharray="1 1" opacity=".45"/></svg></div>

<!-- canvas -->
<div id="canvas" style="left:54px;top:122px;width:432px;height:472px;background:#fff;"><svg style="left:0;top:0" width="432" height="472" viewBox="54 122 432 472">
<g fill="none" stroke="#a3484c" stroke-width="3.6" stroke-linejoin="round" stroke-linecap="round">
<path d="M219 292 H236 V308 L242.8 309.5 A16.7 16.8 0 0 1 242.8 340.1 L236 341.6 L242.8 343.1 A16.7 16.8 0 0 1 242.8 373.7 L236 375.2 L242.8 376.7 A16.7 16.8 0 0 1 242.8 407.3 L236 408.8 L242.8 410.3 A16.7 16.8 0 0 1 242.8 440.9 L236 442.4 L242.8 443.9 A16.7 16.8 0 0 1 242.8 474.5 L236 476.0 V492.3 H219"/>
<path d="M322 225.4 H319.6 L313.1 226.8 A15.9 16.73 0 0 0 313.1 257.4 L319.6 258.9 L313.1 260.3 A15.9 16.73 0 0 0 313.1 290.9 L319.6 292.3 L313.1 293.8 A15.9 16.73 0 0 0 313.1 324.3 L319.6 325.8 L313.1 327.2 A15.9 16.73 0 0 0 313.1 357.8 L319.6 359.2 H322"/>
<path d="M322 425.8 H319.6 L313.1 427.2 A15.9 16.73 0 0 0 313.1 457.8 L319.6 459.3 L313.1 460.7 A15.9 16.73 0 0 0 313.1 491.3 L319.6 492.7 L313.1 494.2 A15.9 16.73 0 0 0 313.1 524.7 L319.6 526.2 L313.1 527.6 A15.9 16.73 0 0 0 313.1 558.2 L319.6 559.6 H322"/>
<path d="M268.9 241.5 V543.5 M286.1 241.5 V543.5" stroke-linecap="butt" stroke-width="4"/>
<path stroke-width="2.7" stroke-linecap="butt" d="M151.2 292.4 H220 M151.2 492.4 H220 M387.6 225.3 H321 M387.6 359.3 H321 M387.6 425.7 H321 M387.6 559.7 H321"/>
</g>
<g fill="#a3484c"><circle cx="232.3" cy="321.2" r="6.9"/><circle cx="324.3" cy="237.3" r="6.9"/><circle cx="325.8" cy="440.6" r="6.9"/></g><g fill="#f4e4e4"><circle cx="232.3" cy="321.2" r="1"/><circle cx="324.3" cy="237.3" r="1"/><circle cx="325.8" cy="440.6" r="1"/></g>
<g fill="none" stroke="#5f985f" stroke-width="1"><circle cx="152.2" cy="292.3" r="13.2"/><circle cx="152.2" cy="492.3" r="13.2"/><circle cx="386.6" cy="225.3" r="13.2"/><circle cx="386.6" cy="359.3" r="13.2"/><circle cx="386.6" cy="425.7" r="13.2"/><circle cx="386.6" cy="559.7" r="13.2"/></g>
<defs><g id="io" fill="none" stroke="#5a965a" stroke-width="1.15"><path d="M0 0 V-11.8 M1.9 0 L5.3 -11.8"/><ellipse cx="11.65" cy="-5.9" rx="4.8" ry="5.8"/><ellipse cx="26.2" cy="-5.9" rx="3.4" ry="5.8"/></g></defs><use href="#io" x="117.3" y="287.25"/><use href="#io" x="117.3" y="487.25"/><use href="#io" x="392.3" y="220.25"/><use href="#io" x="392.3" y="354.25"/><use href="#io" x="392.3" y="420.65"/><use href="#io" x="392.3" y="554.65"/>
<g fill="#4e9a4e" stroke="#4e9a4e" stroke-width="0.25" font-family="Liberation Sans, sans-serif" font-size="17"><text x="95.2" y="146.6" textLength="76.5" lengthAdjust="spacing">Add=Next</text><text x="95.2" y="159.6" textLength="64.6" lengthAdjust="spacing">Swap=0</text></g>
<text x="220.2" y="190.6" fill="#a2a2a2" font-family="Liberation Sans, sans-serif" font-size="32.4" textLength="101.5" lengthAdjust="spacingAndGlyphs">&gt;Name</text>
<g stroke-width="1" stroke-dasharray="1 1" shape-rendering="crispEdges"><path d="M286.5 382 V404" stroke="#fff"/><path d="M286.5 383 V404" stroke="#200808"/><path d="M277 392.5 H298" stroke="#000"/></g>
</svg><div style="left:113px;top:0;width:319px;height:1px;background:#a4a8ae"></div></div>
<div id="vscroll" style="left:486px;top:123px;width:16px;height:471px;background:#fdfdf9;">
<div style="left:1px;top:1px;width:14px;height:15px;box-sizing:border-box;border:1px solid #fff;border-radius:2px;background:#eceae3;box-shadow:0 0 0 1px #f4f3ee"></div>
<svg style="left:3px;top:6px" width="10" height="7"><path d="M1 5.500 L5 1.500 L9 5.500" fill="none" stroke="#c9c7bb" stroke-width="2"/></svg>
<div style="left:1px;top:455px;width:14px;height:15px;box-sizing:border-box;border:1px solid #fff;border-radius:2px;background:#eceae3;box-shadow:0 0 0 1px #f4f3ee"></div>
<svg style="left:3px;top:460px" width="10" height="7"><path d="M1 1.500 L5 5.500 L9 1.500" fill="none" stroke="#c9c7bb" stroke-width="2"/></svg>
</div>
<div id="hscroll" style="left:54px;top:594px;width:432px;height:17px;background:linear-gradient(to bottom,#f2f1ec,#fdfdfb);">
<div style="left:0;top:1px;width:16px;height:15px;box-sizing:border-box;border:1px solid #e0dfd6;border-radius:2px;background:#f3f2ec"></div>
<svg style="left:5px;top:4px" width="6" height="9"><path d="M5 1 L1.5 4.5 L5 8" fill="none" stroke="#c4c3b9" stroke-width="1.8"/></svg>
<div style="left:415px;top:1px;width:16px;height:15px;box-sizing:border-box;border:1px solid #e0dfd6;border-radius:2px;background:#f3f2ec"></div>
<svg style="left:420px;top:4px" width="6" height="9"><path d="M1 1 L4.5 4.5 L1 8" fill="none" stroke="#c4c3b9" stroke-width="1.8"/></svg>
</div>

<!-- right panel -->
<div id="preview" style="left:507px;top:123px;width:157px;height:108px;background:#fff;box-sizing:border-box;border:2px solid;border-color:#8a8a80 #fff #fff #8a8a80;">
<svg style="left:-2px;top:-2px" width="157" height="108" viewBox="507 123 157 108">
<rect x="571" y="139.2" width="31" height="76.3" fill="#fff" stroke="#a8a8a8" stroke-width="1"/>
<g fill="#fff" stroke="#a8a8a8" stroke-width="0.9"><polygon points="569.3,143.5 604.0,145.5 604.0,150.6 569.3,148.6"/><polygon points="569.3,149.1 604.0,151.1 604.0,156.2 569.3,154.2"/><polygon points="569.3,154.4 604.0,156.5 604.0,160.0 569.3,158.0"/><polygon points="569.3,166.4 604.0,168.5 604.0,172.8 569.3,170.8"/><polygon points="569.3,183.0 604.0,185.0 604.0,188.8 569.3,186.8"/><polygon points="569.3,191.9 604.0,193.9 604.0,200.1 569.3,198.0"/><polygon points="569.3,197.5 604.0,199.5 604.0,204.6 569.3,202.6"/><polygon points="569.3,203.4 604.0,205.4 604.0,211.0 569.3,209.0"/></g>
<g fill="#3f9e3f"><polygon points="614.8,148.6 611.7,151.7 607.5,151.7 604.4,148.6 604.4,144.4 607.5,141.3 611.7,141.3 614.8,144.4"/><polygon points="614.8,164.7 611.7,167.8 607.5,167.8 604.4,164.7 604.4,160.5 607.5,157.4 611.7,157.4 614.8,160.5"/><polygon points="614.8,179.5 611.7,182.6 607.5,182.6 604.4,179.5 604.4,175.3 607.5,172.2 611.7,172.2 614.8,175.3"/><polygon points="568.4,179.5 565.3,182.6 561.1,182.6 558.0,179.5 558.0,175.3 561.1,172.2 565.3,172.2 568.4,175.3"/><polygon points="568.4,194.8 565.3,197.9 561.1,197.9 558.0,194.8 558.0,190.6 561.1,187.5 565.3,187.5 568.4,190.6"/><polygon points="568.4,210.1 565.3,213.2 561.1,213.2 558.0,210.1 558.0,205.9 561.1,202.8 565.3,202.8 568.4,205.9"/></g><g fill="#d8f0d8"><circle cx="609.6" cy="146.5" r="0.8"/><circle cx="609.6" cy="162.6" r="0.8"/><circle cx="609.6" cy="177.4" r="0.8"/><circle cx="563.2" cy="177.4" r="0.8"/><circle cx="563.2" cy="192.7" r="0.8"/><circle cx="563.2" cy="208" r="0.8"/></g>
<g fill="#a0a0a0"><rect x="612.5" y="137.5" width="4" height="4" transform="rotate(45 614.5 139.5)"/><rect x="612.5" y="153.5" width="4" height="4"/><rect x="612.5" y="168" width="4" height="4" transform="rotate(45 614.5 170)"/></g>
<g fill="#a0a0a0" font-family="Liberation Sans, sans-serif" font-size="9" letter-spacing="0.7">
<text transform="translate(551.5 191.5) rotate(-90)">&gt;Name</text>
<text transform="translate(624.5 191.5) rotate(-90)">&gt;Value</text></g>
</svg></div>
<div id="ptable" style="left:507px;top:236px;width:156px;height:332px;background:#fff;box-sizing:border-box;border:1px solid #7f9db9;">
<div style="left:0;top:0;width:154px;height:19px;background:#ebeadb;border-bottom:1px solid #d6d2c2;box-shadow:0 1px 0 #e2dece, 0 2px 0 #c8c5b2 inset;"></div>
<div style="left:0;top:17px;width:154px;height:3px;background:linear-gradient(to bottom,#e2dece,#d6d2c2,#cbc7b8)"></div>
<div style="left:98px;top:3px;width:1px;height:14px;background:#c7c5b2;box-shadow:1px 0 0 #fff"></div>
<span style="left:4px;top:5px;white-space:nowrap;transform:scaleX(.925);transform-origin:0 0">Package</span>
<span style="left:104px;top:5px;white-space:nowrap;transform:scaleX(.925);transform-origin:0 0">Variant</span>
<svg style="left:81px;top:6px" width="10" height="6"><path d="M0.5 5.5 L4.5 0.5 L8.5 5.5 Z" fill="#aca899"/></svg>
<div style="left:0;top:22px;width:154px;height:14px;background:#ece9d8"></div>
<span style="left:4px;top:23px;white-space:nowrap;transform:scaleX(.925);transform-origin:0 0">T50_TRIFILAR_T...</span>
<span style="left:104px;top:23px;white-space:nowrap;transform:scaleX(.925);transform-origin:0 0">"</span>
<div style="left:0;top:314px;width:154px;height:16px;background:linear-gradient(to bottom,#f2f1ec,#fdfdfb);"></div>
<div class="sbb" style="left:1px;top:315px;width:15px;height:15px;"></div>
<svg style="left:5px;top:318px" width="7" height="9"><path d="M5.5 1 L2 4.5 L5.5 8" fill="none" stroke="#4d6185" stroke-width="2"/></svg>
<div class="sbb" style="left:138px;top:315px;width:15px;height:15px;"></div>
<svg style="left:142px;top:318px" width="7" height="9"><path d="M1.5 1 L5 4.5 L1.5 8" fill="none" stroke="#4d6185" stroke-width="2"/></svg>
<div class="sbb" style="left:17px;top:315px;width:61px;height:15px;background:linear-gradient(to bottom,#c9d8fd,#bdcffb 50%,#b2c6f6)"></div>
<div style="left:44px;top:319px;width:8px;height:7px;background:repeating-linear-gradient(to right,#eef4fe 0,#eef4fe 1px,#8cb0f8 1px,#8cb0f8 2px)"></div>
</div>
<div class="btn" style="left:508px;top:576px;width:73px;height:21px;">New</div>
<div class="btn" style="left:589px;top:576px;width:73px;height:21px;">Connect</div>
<div class="btn" style="left:508px;top:605px;width:73px;height:21px;">Prefix</div>
<div class="sunk" style="left:589px;top:605px;width:73px;height:21px;border-width:2px;border-color:#aca899 #fff #fff #aca899;"></div>

<!-- bottom -->
<div id="desc" style="left:54px;top:616px;width:431px;height:14px;background:#fff;box-sizing:border-box;border:1px solid;border-color:#8a8a80 #fff #fff #8a8a80;border-bottom:none;">
<span style="left:4px;top:5px;font-weight:bold;font-size:11.5px;color:#000080;white-space:nowrap">Description</span>
<div style="left:211px;top:5px;width:212px;height:10px;background:#c4c4c4;border-top:1px solid #808080;border-left:1px solid #808080"></div>
<div style="left:364px;top:5px;width:1px;height:10px;background:#808080"></div>
<span style="left:213px;top:7px;font-weight:bold;font-size:11.5px;color:#0000c0;white-space:nowrap">Technologies</span>
<span style="left:367px;top:7px;font-weight:bold;font-size:11.5px;color:#0000c0;white-space:nowrap">Attributes</span>
</div>
<div class="sbb" style="left:485px;top:617px;width:16px;height:16px;"></div>
<svg style="left:488px;top:621px" width="10" height="7"><path d="M1 5.5 L5 1.5 L9 5.5" fill="none" stroke="#4d6185" stroke-width="2"/></svg>
</div>
</body>
</html>
